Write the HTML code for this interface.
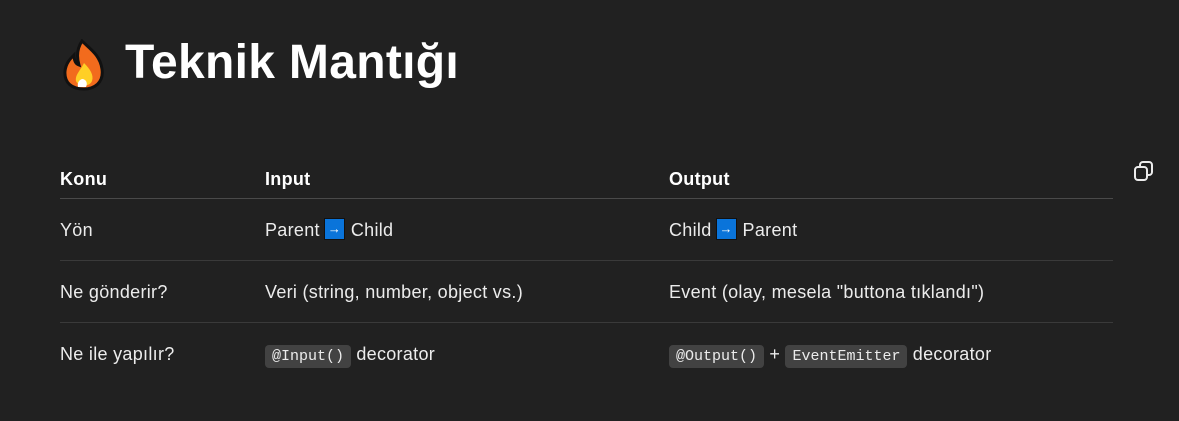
<!DOCTYPE html>
<html><head><meta charset="utf-8"><style>
body{margin:0;width:1179px;height:421px;background:#212121;color:#ececec;font-family:"Liberation Sans","DejaVu Sans",sans-serif;position:relative;overflow:hidden}
.t{position:absolute;white-space:nowrap;font-size:18px;line-height:20px;letter-spacing:0.3px}
h1{position:absolute;left:125px;top:34px;margin:0;font-size:48px;line-height:58px;font-weight:bold;color:#fff;letter-spacing:0.3px}
.b{font-weight:bold;color:#fff}
.line{position:absolute;left:60px;width:1053px;height:1px;background:#3a3a3a}
code{font-family:"Liberation Mono",monospace;font-size:15px;letter-spacing:0;background:#424242;border-radius:4px;padding:3px 7px;color:#ececec}
.ar{display:inline-block;width:19px;height:20px;background:#0a74da;border:1px solid #111;vertical-align:top;position:relative;top:-2px;color:#fff;font-size:13px;line-height:19px;text-align:center;margin:0 6px 0 4px;letter-spacing:0}
</style></head><body>
<svg style="position:absolute;left:60px;top:39px" width="48" height="52" viewBox="0 0 48 52">
<path d="M22 2 C30 10 40 16 42 30 C44 44 34 50 24 50 C12 50 4 44 5 32 C6 24 10 20 14 16 C14 22 16 25 19 26 C16 16 18 8 22 2Z" fill="#f26b1d" stroke="#111" stroke-width="3"/>
<path d="M24 24 C30 30 34 36 32 42 C30 48 18 48 16 42 C15 36 20 32 24 24Z" fill="#ffcf26"/>
<path d="M22 40 C26 40 28 44 26 48 L18 48 C17 44 19 41 22 40Z" fill="#fff"/>
</svg>
<h1>Teknik Mantığı</h1>
<svg style="position:absolute;left:1133px;top:160px" width="22" height="22" viewBox="0 0 22 22" fill="none" stroke="#ececec" stroke-width="2"><rect x="2" y="7" width="12" height="13" rx="3"/><path d="M7 6V5a3 3 0 0 1 3-3h6a3 3 0 0 1 3 3v7a3 3 0 0 1-3 3h-2"/></svg>
<div class="t b" style="left:60px;top:169px">Konu</div>
<div class="t b" style="left:265px;top:169px">Input</div>
<div class="t b" style="left:669px;top:169px">Output</div>
<div class="line" style="top:198px;background:#4a4a4a"></div>
<div class="t" style="left:60px;top:220px">Yön</div>
<div class="t" style="left:265px;top:220px">Parent<span class="ar">→</span>Child</div>
<div class="t" style="left:669px;top:220px">Child<span class="ar">→</span>Parent</div>
<div class="line" style="top:260px"></div>
<div class="t" style="left:60px;top:282px">Ne gönderir?</div>
<div class="t" style="left:265px;top:282px">Veri (string, number, object vs.)</div>
<div class="t" style="left:669px;top:282px">Event (olay, mesela "buttona tıklandı")</div>
<div class="line" style="top:322px"></div>
<div class="t" style="left:60px;top:344px">Ne ile yapılır?</div>
<div class="t" style="left:265px;top:344px"><code>@Input()</code> decorator</div>
<div class="t" style="left:669px;top:344px"><code>@Output()</code> + <code>EventEmitter</code> decorator</div>
</body></html>
